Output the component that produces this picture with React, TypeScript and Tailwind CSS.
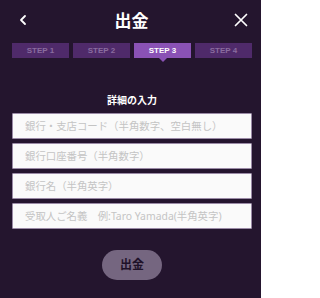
import React from "react";

const steps = ["STEP 1", "STEP 2", "STEP 3", "STEP 4"];
const fields = [
  "銀行・支店コード（半角数字、空白無し）",
  "銀行口座番号（半角数字）",
  "銀行名（半角英字）",
  "受取人ご名義　例:Taro Yamada(半角英字)",
];

export default function App() {
  const active = 2;
  return (
    <div
      className="w-[261px] h-[298px] bg-[#24152e] pl-[12px] pr-[9px] flex flex-col"
      style={{ fontFamily: '"Noto Sans", "Noto Sans CJK JP", sans-serif' }}
    >
      {/* header */}
      <div className="h-[40px] flex items-center justify-between">
        <svg width="14" height="14" viewBox="0 0 14 14" className="ml-[4px]">
          <path d="M9 3 L5 7 L9 11" stroke="#fff" strokeWidth="1.8" fill="none" strokeLinecap="round" strokeLinejoin="round" />
        </svg>
        <h1 className="text-white text-[17px] font-bold leading-none">出金</h1>
        <svg width="16" height="16" viewBox="0 0 16 16" className="mr-[3px]">
          <path d="M2.5 2.5 L13.5 13.5 M13.5 2.5 L2.5 13.5" stroke="#fff" strokeWidth="1.7" strokeLinecap="round" />
        </svg>
      </div>

      {/* steps */}
      <div className="mt-[3px] grid grid-cols-4 gap-[4px]">
        {steps.map((s, i) => (
          <div key={s} className="relative">
            <div
              className={`h-[15px] flex items-center justify-center text-[8px] font-bold font-['Liberation_Sans',sans-serif] ${
                i === active ? "bg-[#8a52b5] text-white" : "bg-[#4f2a6a] text-[#8a6c9f]"
              }`}
            >
              {s}
            </div>
            {i === active && (
              <div className="absolute left-1/2 -translate-x-1/2 top-[15px] w-0 h-0 border-l-[4px] border-r-[4px] border-t-[4px] border-l-transparent border-r-transparent border-t-[#8a52b5]" />
            )}
          </div>
        ))}
      </div>

      <h2 className="mt-[37px] text-center text-white text-[10px] font-bold leading-none">
        詳細の入力
      </h2>

      <div className="mt-[8px] flex flex-col gap-[4px]">
        {fields.map((f) => (
          <input
            key={f}
            placeholder={f}
            className="h-[26px] w-full bg-[#fafafa] border border-[#9a8aa6] rounded-[1px] px-[12px] text-[10.4px] text-[#333] placeholder:text-[#c4c4c4] outline-none"
          />
        ))}
      </div>

      <div className="mt-[21px] flex justify-center">
        <button className="w-[60px] h-[30px] rounded-full bg-[#756680] text-[#1f1229] text-[12px] font-bold">
          出金
        </button>
      </div>
    </div>
  );
}
